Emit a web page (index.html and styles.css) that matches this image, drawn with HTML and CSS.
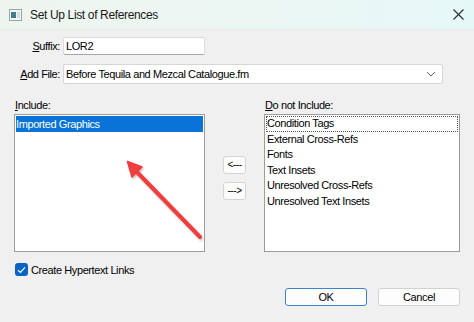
FILE: index.html
```html
<!DOCTYPE html>
<html>
<head>
<meta charset="utf-8">
<link rel="stylesheet" href="styles.css">
</head>
<body>
<div class="window">
  <div class="titlebar">
    <svg class="app-icon" width="13" height="12" viewBox="0 0 13 12">
      <rect x="0.5" y="0.5" width="12" height="11" fill="#f4f6f6" stroke="#9aa3a6"/>
      <rect x="2" y="3" width="5" height="6" fill="#3f7f8c"/>
      <rect x="8" y="3" width="3" height="6" fill="#d5dcdd"/>
    </svg>
    <span class="title">Set Up List of References</span>
    <svg class="close" width="11" height="11" viewBox="0 0 11 11">
      <path d="M0.5 0.5 L10.5 10.5 M10.5 0.5 L0.5 10.5" stroke="#2b2b2b" stroke-width="1.1"/>
    </svg>
  </div>
  <div class="content">
    <div class="fields">
      <span class="lbl"><u>S</u>uffix:</span>
      <div class="textbox short">LOR2</div>
      <span class="lbl"><u>A</u>dd File:</span>
      <div class="combo">
        <span>Before Tequila and Mezcal Catalogue.fm</span>
        <svg width="10" height="6" viewBox="0 0 10 6"><path d="M1 1 L5 5 L9 1" fill="none" stroke="#6b6b6b" stroke-width="1"/></svg>
      </div>
    </div>
    <div class="lists">
      <span class="lbl-top"><u>I</u>nclude:</span>
      <span></span>
      <span class="lbl-top"><u>D</u>o not Include:</span>
      <div class="listbox">
        <div class="item selected">Imported Graphics</div>
      </div>
      <div class="movers">
        <div class="mini">&lt;---</div>
        <div class="mini">---&gt;</div>
      </div>
      <div class="listbox">
        <div class="item focus">Condition Tags</div>
        <div class="item">External Cross-Refs</div>
        <div class="item">Fonts</div>
        <div class="item">Text Insets</div>
        <div class="item">Unresolved Cross-Refs</div>
        <div class="item">Unresolved Text Insets</div>
      </div>
    </div>
    <div class="check">
      <span class="box"><svg width="9" height="8" viewBox="0 0 9 8"><path d="M1 4.2 L3.4 6.5 L8 1.3" fill="none" stroke="#fff" stroke-width="1.2"/></svg></span>
      <span>Create Hypertext Links</span>
    </div>
    <div class="actions">
      <div class="btn default">OK</div>
      <div class="btn">Cancel</div>
    </div>
  </div>
  <svg class="annot" width="474" height="322" viewBox="0 0 474 322">
    <defs>
      <filter id="sh" x="-20%" y="-20%" width="140%" height="140%">
        <feDropShadow dx="1" dy="1.5" stdDeviation="1.2" flood-color="#000" flood-opacity="0.25"/>
      </filter>
    </defs>
    <g filter="url(#sh)">
      <path d="M200 237 L135 170" stroke="#f03c3c" stroke-width="4" stroke-linecap="round"/>
      <path d="M127.5 161.5 L142 167 L132 177 Z" fill="#f03c3c" stroke="#f03c3c" stroke-width="1.5" stroke-linejoin="round"/>
    </g>
  </svg>
</div>
</body>
</html>
```

FILE: styles.css
```css
* { box-sizing: border-box; }
html, body { margin: 0; padding: 0; }
body {
  width: 474px;
  height: 322px;
  overflow: hidden;
  background: #f0f0f0;
  font-family: "Liberation Sans", Arial, sans-serif;
  font-size: 11px;
  letter-spacing: -0.4px;
  color: #000;
}
.window {
  position: relative;
  width: 474px;
  height: 322px;
  background: #f0f0f0;
}
.titlebar {
  height: 30px;
  display: flex;
  align-items: center;
  padding-left: 9px;
  background: linear-gradient(90deg, #eef5ef 0%, #ecf6f2 50%, #e5f8f8 100%);
  border-bottom: 1px solid #e8ecea;
}
.app-icon { flex: none; margin-top: 1px; }
.title {
  margin-left: 8px;
  font-size: 12px;
  letter-spacing: -0.35px;
  color: #1a1a1a;
  flex: 1;
}
.close { margin-right: 10px; margin-top: -1px; }
.content {
  padding: 7px 14px 0 14px;
}
.fields {
  display: grid;
  grid-template-columns: 46px auto;
  column-gap: 3px;
  row-gap: 9px;
  align-items: center;
}
.lbl { text-align: right; white-space: nowrap; }
.textbox {
  height: 18px;
  background: #fff;
  border: 1px solid #dcdcdc;
  border-bottom-color: #a9a9a9;
  border-radius: 2px;
  padding-left: 2px;
  line-height: 16px;
}
.textbox.short { width: 142px; }
.combo {
  width: 380px;
  height: 20px;
  background: #fff;
  border: 1px solid #d6d6d6;
  border-radius: 2px;
  display: flex;
  align-items: center;
  justify-content: space-between;
  padding: 0 6px 0 2px;
}
.lists {
  margin-top: 14px;
  display: grid;
  grid-template-columns: 191px 59px 196px;
  grid-template-rows: 16px 138px;
}
.lbl-top { line-height: 14px; padding-left: 1px; }
.listbox {
  background: #fff;
  border: 1px solid #9c9c9c;
  padding: 1px;
}
.item {
  height: 15.6px;
  line-height: 15.6px;
  padding-left: 1px;
  white-space: nowrap;
}
.item.selected {
  height: 16px;
  line-height: 16px;
  background: #0a73d8;
  color: #fff;
  padding-left: 0;
}
.item.focus { outline: 1px dotted #555; outline-offset: -1px; }
.movers {
  display: flex;
  flex-direction: column;
  gap: 8px;
  padding: 42px 0 0 18px;
}
.mini {
  width: 23px;
  height: 18px;
  background: #fcfcfc;
  border: 1px solid #d4d4d4;
  border-radius: 3px;
  text-align: center;
  line-height: 16px;
  font-size: 10px;
}
.check {
  margin-top: 11px;
  display: flex;
  align-items: center;
  gap: 3px;
  height: 13px;
  padding-left: 1px;
}
.box {
  width: 13px;
  height: 13px;
  border-radius: 3px;
  background: #0a63c6;
  display: flex;
  align-items: center;
  justify-content: center;
}
.actions {
  margin-top: 12px;
  display: flex;
  justify-content: flex-end;
  gap: 11px;
}
.btn {
  width: 82px;
  height: 18px;
  background: #fdfdfd;
  border: 1px solid #d2d2d2;
  border-radius: 3px;
  text-align: center;
  line-height: 16px;
}
.btn.default {
  border-color: #3a84d6;
}
.annot {
  position: absolute;
  left: 0;
  top: 0;
  pointer-events: none;
}
```
